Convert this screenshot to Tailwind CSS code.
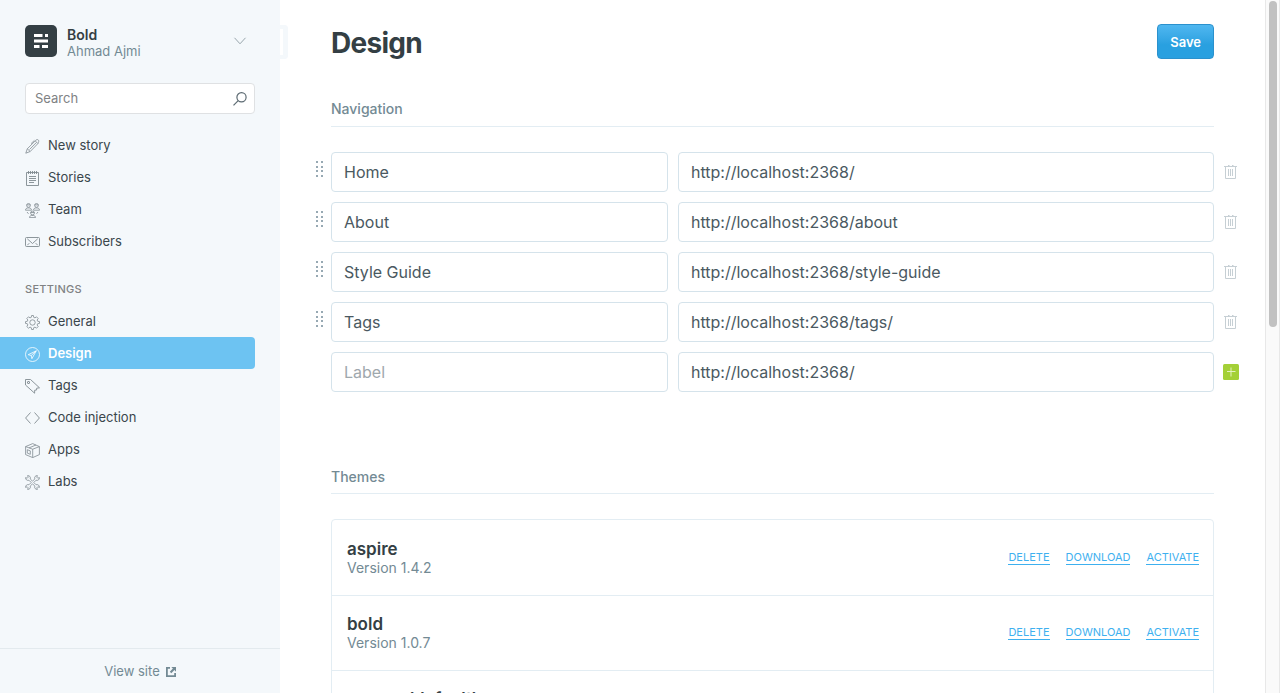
<!DOCTYPE html>
<html lang="en">
<head>
<meta charset="utf-8">
<meta name="viewport" content="width=device-width, initial-scale=1">
<title>Design - Bold</title>
<script src="https://cdn.jsdelivr.net/npm/@tailwindcss/browser@4"></script>
</head>
<body class="flex h-screen overflow-hidden bg-white font-['Inter',sans-serif] text-[13px] text-[#3a464c]">

<!-- Shared icon shapes -->
<svg class="hidden" aria-hidden="true">
  <symbol id="grip" viewBox="0 0 8 16"><path d="M1 0h2v2H1zM6 0h2v2H6zM1 5h2v2H1zM6 5h2v2H6zM1 9h2v2H1zM6 9h2v2H6zM1 14h2v2H1zM6 14h2v2H6z" fill="#97a9b3"/></symbol>
  <symbol id="trash" viewBox="0 0 13 14"><path d="M0 1.500h13M1.500 1.500v12h10v-12M4 .5h1.500M8 .5h1.500M4.500 4v7M6.500 4v7M8.500 4v7" fill="none" stroke="#c6cfd4"/></symbol>
</svg>

<aside class="relative flex w-[280px] shrink-0 flex-col bg-[#f4f8fb]">
  <div class="absolute top-[25px] left-full h-[34px] w-2 rounded-r border-y-[4px] border-r-[5px] border-[#f4f8fb] bg-white"></div>

  <header class="flex items-start pt-[25px] pr-[33px] pl-[25px]">
    <svg class="size-8 shrink-0" viewBox="0 0 32 32" aria-hidden="true">
      <rect width="32" height="32" rx="5" fill="#343f44"/>
      <path d="M9 9h8.500v3H9zM20 9h3v3h-3zM9 14.500h14v3H9zM9 20h5.500v3H9zM17 20h6v3h-6z" fill="#fff"/>
    </svg>
    <div class="ml-[10px] flex-1 pt-[2px]">
      <div class="text-sm leading-4 font-semibold text-[#343f44]">Bold</div>
      <div class="leading-4 text-[#738a94]">Ahmad Ajmi</div>
    </div>
    <button type="button" aria-label="Account menu" class="mt-3"><svg class="h-2 w-[14px]" viewBox="0 0 14 8" fill="none" stroke="#98a5ac"><path d="M1.500 .8l5.500 6 5.500-6"/></svg></button>
  </header>

  <div class="mx-[25px] mt-6 flex h-[31px] items-center rounded-[4px] border border-[#dfe1e3] bg-white pr-[7px] pl-[9px]">
    <input type="search" aria-label="Search" placeholder="Search" class="min-w-0 flex-1 bg-transparent outline-none placeholder:text-[#808284]">
    <button type="button" aria-label="Search"><svg class="size-[14px]" viewBox="0 0 14 14" fill="none" stroke="#5c6a72" stroke-width="1.2"><circle cx="8.500" cy="5.300" r="4.600"/><path d="M5.200 8.600L.5 13.300"/></svg></button>
  </div>

  <nav class="mt-[15px] flex-1">
    <a href="#" class="flex h-8 items-center gap-2 pt-[2px] pl-[25px]">
      <svg class="size-[15px]" viewBox="0 0 15 15" fill="none" stroke="#808a90" stroke-width=".8"><path d="M.8 14.200l1.500-4.400L10.200 1.900l2.700 2.700-7.700 7.900zM2.300 9.800l2.900 2.700M10.200 1.900c1-1.300 2.200-1.700 3-1s.7 2-.3 3.700M9.400 1.400L6 4.700M4.500 10.500l6.800-6.900"/></svg>
      New story</a>
    <a href="#" class="flex h-8 items-center gap-2 pt-[2px] pl-[25px]">
      <svg class="size-[15px]" viewBox="0 0 15 15" fill="none" stroke="#808a90" stroke-width=".9"><path d="M1.500 1.500h12v13h-12zM3.500 0v3M5.500 0v3M7.500 0v3M9.500 0v3M11.500 0v3M4 5.500h7M4 7.500h7M4 9.500h7M4 11.500h5"/></svg>
      Stories</a>
    <a href="#" class="flex h-8 items-center gap-2 pt-[2px] pl-[25px]">
      <svg class="size-[15px]" viewBox="0 0 15 15" fill="none" stroke="#808a90" stroke-width=".8"><circle cx="3.500" cy="2.400" r="1.900"/><circle cx="11.500" cy="2.400" r="1.900"/><circle cx="7.500" cy="10" r="1.900"/><path d="M.5 7.200c0-1.600 1-2 2.300-2.300h1.400c1.300.3 2.300.7 2.300 2.300zM8.500 7.200c0-1.600 1-2 2.300-2.300h1.400c1.300.3 2.300.7 2.300 2.300zM4.500 14.600c0-1.500 1-2 2.300-2.200h1.400c1.300.2 2.300.7 2.300 2.200zM1.700 1.900h3.600M9.700 1.900h3.600M5.700 9.500h3.600M2 9l1.500 1.800M13 9l-1.500 1.800"/></svg>
      Team</a>
    <a href="#" class="flex h-8 items-center gap-2 pt-[2px] pl-[25px]">
      <svg class="size-[15px]" viewBox="0 0 15 15" fill="none" stroke="#808a90" stroke-width=".9"><rect x=".5" y="2.500" width="14" height="9" rx="1"/><path d="M2.300 3.800l5.200 4.700 5.200-4.700M2.300 10.200l2-2M12.700 10.200l-2-2"/></svg>
      Subscribers</a>

    <h2 class="mt-6 mb-2 pl-[25px] text-[11px] leading-4 font-medium tracking-wide text-[#808284]">SETTINGS</h2>

    <a href="#" class="flex h-8 items-center gap-2 pt-[2px] pl-[25px]">
      <svg class="size-[15px]" viewBox="0 0 15 15" fill="none" stroke="#808a90" stroke-width=".8"><circle cx="7.500" cy="7.500" r="2.700"/><path d="M6.300 2.300L6.600.5h1.800l.3 1.800 1.300.6 1.500-1.100 1.700 1.700-1.100 1.500.6 1.300 1.800.3v1.800l-1.800.3-.6 1.300 1.100 1.500-1.700 1.700-1.500-1.100-1.300.6-.3 1.800H6.600l-.3-1.800-1.300-.6-1.500 1.100-1.700-1.700 1.100-1.500-.6-1.300-1.800-.3V6.600l1.800-.3.6-1.300-1.100-1.500 1.700-1.700L5 2.900z"/></svg>
      General</a>
    <a href="#" aria-current="page" class="mr-[25px] flex h-8 items-center gap-2 rounded-r bg-[#6dc3f2] pt-[2px] pl-[25px] font-semibold text-white">
      <svg class="size-[15px]" viewBox="0 0 15 15" fill="none" stroke="#fff" stroke-width=".8"><circle cx="7.500" cy="7.500" r="7"/><path d="M11.300 3.800L3.200 7.700l3 .8.700 3.200zM6.200 8.500l5.100-4.700"/></svg>
      Design</a>
    <a href="#" class="flex h-8 items-center gap-2 pt-[2px] pl-[25px]">
      <svg class="size-[15px]" viewBox="0 0 15 15" fill="none" stroke="#808a90" stroke-width=".9"><path d="M.5.5H5.500l9 8.300-2.800.4-.1 1.800-1.900.2-.1 3L.5 6z"/><rect x="2.500" y="2.500" width="2" height="2" rx=".5"/></svg>
      Tags</a>
    <a href="#" class="flex h-8 items-center gap-2 pt-[2px] pl-[25px]">
      <svg class="size-[15px]" viewBox="0 0 15 15" fill="none" stroke="#808a90" stroke-width=".9"><path d="M5.500 1.500L.6 7l4.900 5.500M9.500 1.500L14.400 7l-4.900 5.500"/></svg>
      Code injection</a>
    <a href="#" class="flex h-8 items-center gap-2 pt-[2px] pl-[25px]">
      <svg class="size-[15px]" viewBox="0 0 15 15" fill="none" stroke="#808a90" stroke-width=".8"><path d="M.6 3.600L7.700.6l6.700 3v8l-6.700 3-7.100-3zM.6 3.600l7.100 2.600 6.700-2.600M7.700 6.200v8.400M4 4.900l7-2.900M2.300 6.700l3 1.200v3.400l-3-1.200z"/></svg>
      Apps</a>
    <a href="#" class="flex h-8 items-center gap-2 pt-[2px] pl-[25px]">
      <svg class="size-[15px]" viewBox="0 0 15 15" fill="none" stroke="#808a90" stroke-width=".8">
        <g id="jaw"><path d="M2.600.600A2.400 2.400 0 0 1 5.200 3.900L7.500 6.200M.600 2.600A2.400 2.400 0 0 0 3.900 5.200L6.200 7.500M2.600.600L3.200 2.200 2.200 3.200.600 2.600"/></g>
        <use href="#jaw" transform="rotate(90 7.500 7.500)"/><use href="#jaw" transform="rotate(180 7.500 7.500)"/><use href="#jaw" transform="rotate(270 7.500 7.500)"/>
      </svg>
      Labs</a>
  </nav>

  <footer class="flex h-[45px] items-center justify-center border-t border-[#e3eaee] pt-[2px]">
    <a href="#" class="flex items-center gap-[6px] text-[#738a94]">View site
      <svg class="size-[10px]" viewBox="0 0 10 10" fill="#738a94"><path d="M0 0h4v1.800H1.800v6.400h6.400V6H10v4H0zM5.300 0H10v4.700L8.400 3.100 5.300 6.200 3.800 4.700 6.900 1.600z"/></svg></a>
  </footer>
</aside>

<main class="min-w-0 flex-1 overflow-hidden pr-[26px] pl-[35px]">
  <header class="mt-6 mr-[25px] ml-4 flex items-end justify-between">
    <h1 class="text-[28px] leading-8 font-bold tracking-tight text-[#343f44]">Design</h1>
    <button type="button" class="h-[35px] rounded-[4px] border border-[#2b91cd] bg-linear-to-b from-[#4fb7f0] to-[#29a0e0] to-60% px-3 pt-[2px] text-[13px] font-semibold text-white">Save</button>
  </header>

  <section>
    <h2 class="mt-10 mr-[25px] ml-4 border-b border-[#e3edf3] pb-[7px] text-sm leading-5 font-medium text-[#738a94]">Navigation</h2>
    <ul class="mt-[25px] flex flex-col gap-[10px] text-base text-[#4a5961]">
      <li class="flex items-center">
        <button type="button" aria-label="Reorder Home" class="mb-[6px] w-4 shrink-0"><svg class="h-4 w-2"><use href="#grip"/></svg></button>
        <div class="grid flex-1 grid-cols-[337fr_536fr] gap-[10px]">
          <input aria-label="Label" value="Home" class="h-10 min-w-0 rounded-[4px] border border-[#d5e3eb] px-3">
          <input aria-label="URL" value="http://localhost:2368/" class="h-10 min-w-0 rounded-[4px] border border-[#d5e3eb] px-3">
        </div>
        <button type="button" aria-label="Delete Home" class="flex w-[25px] shrink-0 justify-end pr-[2px]"><svg class="h-[14px] w-[13px]"><use href="#trash"/></svg></button>
      </li>
      <li class="flex items-center">
        <button type="button" aria-label="Reorder About" class="mb-[6px] w-4 shrink-0"><svg class="h-4 w-2"><use href="#grip"/></svg></button>
        <div class="grid flex-1 grid-cols-[337fr_536fr] gap-[10px]">
          <input aria-label="Label" value="About" class="h-10 min-w-0 rounded-[4px] border border-[#d5e3eb] px-3">
          <input aria-label="URL" value="http://localhost:2368/about" class="h-10 min-w-0 rounded-[4px] border border-[#d5e3eb] px-3">
        </div>
        <button type="button" aria-label="Delete About" class="flex w-[25px] shrink-0 justify-end pr-[2px]"><svg class="h-[14px] w-[13px]"><use href="#trash"/></svg></button>
      </li>
      <li class="flex items-center">
        <button type="button" aria-label="Reorder Style Guide" class="mb-[6px] w-4 shrink-0"><svg class="h-4 w-2"><use href="#grip"/></svg></button>
        <div class="grid flex-1 grid-cols-[337fr_536fr] gap-[10px]">
          <input aria-label="Label" value="Style Guide" class="h-10 min-w-0 rounded-[4px] border border-[#d5e3eb] px-3">
          <input aria-label="URL" value="http://localhost:2368/style-guide" class="h-10 min-w-0 rounded-[4px] border border-[#d5e3eb] px-3">
        </div>
        <button type="button" aria-label="Delete Style Guide" class="flex w-[25px] shrink-0 justify-end pr-[2px]"><svg class="h-[14px] w-[13px]"><use href="#trash"/></svg></button>
      </li>
      <li class="flex items-center">
        <button type="button" aria-label="Reorder Tags" class="mb-[6px] w-4 shrink-0"><svg class="h-4 w-2"><use href="#grip"/></svg></button>
        <div class="grid flex-1 grid-cols-[337fr_536fr] gap-[10px]">
          <input aria-label="Label" value="Tags" class="h-10 min-w-0 rounded-[4px] border border-[#d5e3eb] px-3">
          <input aria-label="URL" value="http://localhost:2368/tags/" class="h-10 min-w-0 rounded-[4px] border border-[#d5e3eb] px-3">
        </div>
        <button type="button" aria-label="Delete Tags" class="flex w-[25px] shrink-0 justify-end pr-[2px]"><svg class="h-[14px] w-[13px]"><use href="#trash"/></svg></button>
      </li>
      <li class="flex items-center pl-4">
        <div class="grid flex-1 grid-cols-[337fr_536fr] gap-[10px]">
          <input aria-label="Label" placeholder="Label" class="h-10 min-w-0 rounded-[4px] border border-[#d5e3eb] px-3 placeholder:text-[#9fa8ad]">
          <input aria-label="URL" value="http://localhost:2368/" class="h-10 min-w-0 rounded-[4px] border border-[#d5e3eb] px-3">
        </div>
        <button type="button" aria-label="Add item" class="flex w-[25px] shrink-0 justify-end"><svg class="size-4" viewBox="0 0 16 16"><rect width="16" height="16" rx="1.500" fill="#a4d037"/><path d="M8 3.500v9M4 7.500h8.500" stroke="#e4f2c0"/></svg></button>
      </li>
    </ul>
  </section>

  <section class="mt-[75px] mr-[25px] ml-4">
    <h2 class="border-b border-[#e3edf3] pb-[6px] text-sm leading-5 font-medium text-[#738a94]">Themes</h2>
    <ul class="mt-[25px] divide-y divide-[#e3edf3] rounded-[4px] border border-[#e3edf3]">
      <li class="flex h-[76px] items-center justify-between pr-[14px] pl-[15px]">
        <div>
          <h3 class="text-[17px] leading-5 font-semibold text-[#343f44]">aspire</h3>
          <p class="text-sm leading-[18px] text-[#738a94]">Version 1.4.2</p>
        </div>
        <div class="flex gap-4 text-[11px] leading-[13px] text-[#3eb0ef]"><a href="#" class="border-b border-[#3eb0ef]">DELETE</a><a href="#" class="border-b border-[#3eb0ef]">DOWNLOAD</a><a href="#" class="border-b border-[#3eb0ef]">ACTIVATE</a></div>
      </li>
      <li class="flex h-[75px] items-center justify-between pr-[14px] pl-[15px]">
        <div>
          <h3 class="text-[17px] leading-5 font-semibold text-[#343f44]">bold</h3>
          <p class="text-sm leading-[18px] text-[#738a94]">Version 1.0.7</p>
        </div>
        <div class="flex gap-4 text-[11px] leading-[13px] text-[#3eb0ef]"><a href="#" class="border-b border-[#3eb0ef]">DELETE</a><a href="#" class="border-b border-[#3eb0ef]">DOWNLOAD</a><a href="#" class="border-b border-[#3eb0ef]">ACTIVATE</a></div>
      </li>
      <li class="h-[75px] pt-[18px] pr-[14px] pl-[15px]">
        <h3 class="text-[17px] leading-5 font-semibold text-[#343f44]">casper (default)</h3>
      </li>
    </ul>
  </section>
</main>

<!-- Scroll track -->
<div class="flex w-[15px] shrink-0 justify-center border-x border-[#e8e8e8] bg-[#fafafa] pt-px" aria-hidden="true">
  <div class="h-[47vh] w-2 rounded-full bg-[#c1c1c1]"></div>
</div>
</body>
</html>
